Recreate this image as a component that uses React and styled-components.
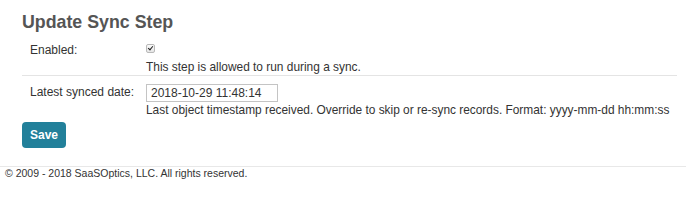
import React from "react";
import styled, { createGlobalStyle } from "styled-components";

const GlobalStyle = createGlobalStyle`
  html, body {
    margin: 0;
    padding: 0;
    background: #fff;
  }
  body {
    font-family: "Liberation Sans", Arial, sans-serif;
    font-size: 12px;
    line-height: 15px;
    color: #333;
  }
`;

const Page = styled.div`
  width: 686px;
  height: 210px;
  overflow: hidden;
`;

const Content = styled.div`
  padding: 0 9px 0 22px;
`;

const Title = styled.h2`
  margin: 0;
  padding-top: 11px;
  font-size: 17.8px;
  line-height: 22px;
  font-weight: bold;
  color: #555;
`;

const FormTable = styled.div`
  margin-top: 8px;
`;

const Row = styled.div`
  display: grid;
  grid-template-columns: 124px 1fr;
  padding: ${(p) => (p.$first ? "2px 0 0" : "8px 0 0")};
  border-top: ${(p) => (p.$first ? "none" : "1px solid #e4e4e4")};
  min-height: ${(p) => (p.$first ? "31px" : "0")};
`;

const Label = styled.div`
  padding-left: 8px;
  padding-top: ${(p) => p.$top || 0}px;
`;

const Field = styled.div`
  display: flex;
  flex-direction: column;
  align-items: flex-start;
  font-size: 11.9px;
`;

const Check = styled.input`
  appearance: none;
  width: 9px;
  height: 9px;
  margin: 1px 0 7px;
  border: 1px solid #b9b9b9;
  border-radius: 2px;
  background: linear-gradient(#fafafa, #e6e6e6);
  position: relative;
  box-sizing: border-box;

  &:checked::after {
    content: "";
    position: absolute;
    left: 2px;
    top: 0px;
    width: 2px;
    height: 4px;
    border: solid #222;
    border-width: 0 1.5px 1.5px 0;
    transform: rotate(40deg);
  }
`;

const DateInput = styled.input`
  box-sizing: border-box;
  width: 132px;
  height: 18px;
  padding: 0 4px;
  border: 1px solid #c4c4c4;
  font-family: "Liberation Sans", Arial, sans-serif;
  font-size: 12px;
  color: #333;
  outline: none;
  margin-bottom: 1px;
`;

const Help = styled.div`
  color: #333;
`;

const SaveButton = styled.button`
  margin-top: 4px;
  width: 44px;
  height: 26px;
  border: none;
  border-radius: 4px;
  background: #22809a;
  color: #fff;
  font-family: "Liberation Sans", Arial, sans-serif;
  font-size: 12px;
  font-weight: bold;
  padding: 0;
`;

const Footer = styled.footer`
  margin-top: 18px;
  border-top: 1px solid #e8e8e8;
  padding: 0 0 0 5px;
  font-size: 10.5px;
  line-height: 13px;
  color: #333;
`;

export default function App() {
  return (
    <Page>
      <GlobalStyle />
      <Content>
        <Title>Update Sync Step</Title>
        <FormTable>
          <Row $first>
            <Label>Enabled:</Label>
            <Field>
              <Check type="checkbox" defaultChecked />
              <Help>This step is allowed to run during a sync.</Help>
            </Field>
          </Row>
          <Row>
            <Label $top={1}>Latest synced date:</Label>
            <Field>
              <DateInput type="text" defaultValue="2018-10-29 11:48:14" />
              <Help>
                Last object timestamp received. Override to skip or re-sync
                records. Format: yyyy-mm-dd hh:mm:ss
              </Help>
            </Field>
          </Row>
        </FormTable>
        <SaveButton>Save</SaveButton>
      </Content>
      <Footer>© 2009 - 2018 SaaSOptics, LLC. All rights reserved.</Footer>
    </Page>
  );
}
